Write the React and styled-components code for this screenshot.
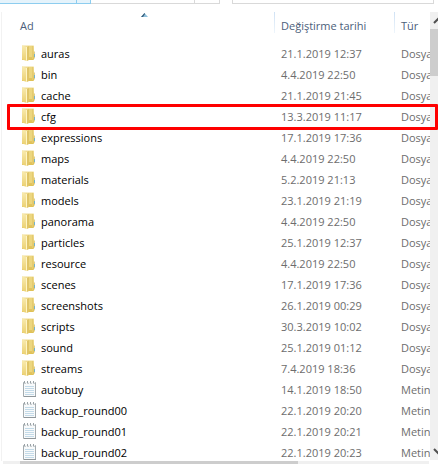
import React from 'react'
import styled, { createGlobalStyle, css } from 'styled-components';

const files = [
    { name: 'auras', date: '21.1.2019 12:37', folder: true },
    { name: 'bin', date: '4.4.2019 22:50', folder: true },
    { name: 'cache', date: '21.1.2019 21:45', folder: true },
    { name: 'cfg', date: '13.3.2019 11:17', folder: true, marked: true },
    { name: 'expressions', date: '17.1.2019 17:36', folder: true },
    { name: 'maps', date: '4.4.2019 22:50', folder: true },
    { name: 'materials', date: '5.2.2019 21:13', folder: true },
    { name: 'models', date: '23.1.2019 21:19', folder: true },
    { name: 'panorama', date: '4.4.2019 22:50', folder: true },
    { name: 'particles', date: '25.1.2019 12:37', folder: true },
    { name: 'resource', date: '4.4.2019 22:50', folder: true },
    { name: 'scenes', date: '17.1.2019 17:36', folder: true },
    { name: 'screenshots', date: '26.1.2019 00:29', folder: true },
    { name: 'scripts', date: '30.3.2019 10:02', folder: true },
    { name: 'sound', date: '25.1.2019 01:12', folder: true },
    { name: 'streams', date: '7.4.2019 18:36', folder: true },
    { name: 'autobuy', date: '14.1.2019 18:50' },
    { name: 'backup_round00', date: '22.1.2019 20:20' },
    { name: 'backup_round01', date: '22.1.2019 20:21' },
    { name: 'backup_round02', date: '22.1.2019 20:23' },
];

const FolderIcon = () => (
    <Icon viewBox="0 0 16 17" aria-hidden="true">
        <defs>
            <linearGradient id="folderBack" x1="0" x2="0" y1="0" y2="1">
                <stop offset="0" stopColor="#f0dc92" />
                <stop offset="1" stopColor="#dfc054" />
            </linearGradient>
            <linearGradient id="folderFront" x1="0" x2="0" y1="0" y2="1">
                <stop offset="0" stopColor="#f8eaae" />
                <stop offset="1" stopColor="#ebd070" />
            </linearGradient>
        </defs>
        <path d="M2 .5h11.500l.5.5v13.500l-1 .5H2z" fill="url(#folderBack)" />
        <path d="M9 1h3v11H9z" fill="#ecd67f" />
        <path d="M12 1h1v13h-1z" fill="#e3ca70" />
        <path d="M14 6.500h1v7h-1z" fill="#dfcf8c" />
        <path d="M14 9h1v3h-1z" fill="#74b3cc" />
        <path d="M2 .5l5 1.500v14l-5-1.500z" fill="url(#folderFront)" />
        <path d="M7 2l2-1v14l-2 1z" fill="#dfc467" />
        <path d="M6 2h1v14l-1-.5z" fill="#fff5c6" />
    </Icon>
)

const TextIcon = () => (
    <Icon viewBox="0 0 16 17" aria-hidden="true">
        <path d="M3.500 1.500h12v14h-12z" fill="#f8fafb" stroke="#a3abaf" />
        <path d="M4 15.500h12" stroke="#8f979b" />
        <path d="M4 1.500h11" stroke="#f0f2f3" />
        <path d="M4.500 0v2l1 1M7.500 0v2l1 1M10.500 0v2l1 1M13.500 0v2l1 1" fill="none" stroke="#9aa2a6" />
        <path d="M5 5.500h9M5 7.500h9M5 9.500h9M5 11.500h9M5 13.500h9" stroke="#c3dae8" />
    </Icon>
)

const App = () => {

    return (
        <Window>
            <GlobalStyle />
            <TopBar>
                <PathBox>
                    <PathPart $active $width="77px" />
                    <PathPart $active $width="14px" />
                    <PathPart $width="104px" />
                    <PathPart $width="25px" />
                </PathBox>
                <SearchBox />
            </TopBar>
            <Content>
                <ListPane>
                    <FileTable>
                        <colgroup>
                            <NameCol />
                            <DateCol />
                            <col />
                        </colgroup>
                        <thead>
                            <tr>
                                <HeadCell scope="col" aria-sort="ascending">
                                    Ad
                                    <SortArrow viewBox="0 0 7 4" aria-hidden="true">
                                        <path d="M3.500 0L7 4H0z" fill="#8fc0dc" />
                                        <path d="M3.500 0L0 4h2l2-3z" fill="#365c79" />
                                    </SortArrow>
                                </HeadCell>
                                <HeadCell scope="col" $line>Değiştirme tarihi</HeadCell>
                                <HeadCell scope="col" $line>Tür</HeadCell>
                            </tr>
                        </thead>
                        <tbody>
                            {files.map((file) => (
                                <tr key={file.name}>
                                    <NameCell>
                                        <FileName>
                                            {file.folder ? <FolderIcon /> : <TextIcon />}
                                            {file.name}
                                        </FileName>
                                        {file.marked && <Marker />}
                                    </NameCell>
                                    <InfoCell>{file.date}</InfoCell>
                                    <InfoCell>{file.folder ? 'Dosya' : 'Metin'}</InfoCell>
                                </tr>
                            ))}
                        </tbody>
                    </FileTable>
                </ListPane>
                <ScrollColumn>
                    <ScrollButton type="button" aria-label="Yukarı kaydır">
                        <Arrow viewBox="0 0 17 17"><path d="M4 11l4.500-4.500L13 11" /></Arrow>
                    </ScrollButton>
                    <VerticalThumb />
                    <ScrollButton type="button" aria-label="Aşağı kaydır" $end>
                        <Arrow viewBox="0 0 17 17"><path d="M4 6l4.500 4.500L13 6" /></Arrow>
                    </ScrollButton>
                </ScrollColumn>
            </Content>
            <BottomScroll>
                <HorizontalThumb />
            </BottomScroll>
        </Window>
    )
}

export default App;

const GlobalStyle = createGlobalStyle`
*{
box-sizing: border-box;
}

body{
margin: 0;
background: white;
font-family: "Open Sans", "Noto Sans", sans-serif;
font-size: 11px;
}
`;

const Window = styled.div`
position: relative;
display: flex;
flex-direction: column;
height: 100vh;
overflow: hidden;
`;

const TopBar = styled.div`
display: flex;
flex: none;
gap: 12px;
height: 4px;
padding-right: 4px;
margin-bottom: 8px;
`;

const PathBox = styled.div`
display: flex;
flex: none;
`;

const PathPart = styled.div`
width: ${props => props.$width};
border-right: 1px solid ${props => props.$active ? '#8dcdef' : '#d9d9d9'};
border-bottom: 1px solid ${props => props.$active ? '#8dcdef' : '#d9d9d9'};
background: ${props => props.$active ? '#e5f3fb' : 'white'};
`;

const SearchBox = styled.div`
flex: 1;
border: 1px solid #d9d9d9;
border-top: none;
`;

const Content = styled.div`
display: flex;
flex: 1;
min-height: 0;
`;

const ListPane = styled.div`
flex: 1;
min-width: 0;
overflow: hidden;
margin-left: 1px;
border-left: 1px solid #f2f2f2;
`;

const FileTable = styled.table`
width: 100%;
table-layout: fixed;
border-collapse: collapse;
`;

const NameCol = styled.col`
width: 272px;
`;

const DateCol = styled.col`
width: 120px;
`;

const cell = css`
padding: 0;
text-align: left;
font-weight: normal;
white-space: nowrap;
overflow: hidden;
`;

const HeadCell = styled.th`
${cell}
position: relative;
height: 31px;
padding: 0 0 5px ${props => props.$line ? '7px' : '18px'};
color: #4c607a;
${props => props.$line && css`
background: linear-gradient(#d0e2f5, #eef5fb) no-repeat left top / 1px 21px;
`}
`;

const SortArrow = styled.svg`
position: absolute;
top: 1px;
left: 51%;
width: 7px;
height: 4px;
`;

const NameCell = styled.td`
${cell}
height: 21px;
padding-left: 18px;
color: black;
`;

const FileName = styled.div`
display: flex;
align-items: center;
gap: 5px;
height: 21px;
`;

const InfoCell = styled.td`
${cell}
padding-left: 7px;
color: #6d6d6d;
`;

const Icon = styled.svg`
flex: none;
width: 16px;
height: 17px;
`;

/* red frame drawn over the row and the scrollbar */
const Marker = styled.div`
position: absolute;
left: 7px;
right: 0;
height: 26px;
margin-top: -23px;
border: 3px solid #fe0000;
border-radius: 1px;
z-index: 1;
`;

const ScrollColumn = styled.div`
display: flex;
flex-direction: column;
flex: none;
width: 8px;
margin-bottom: 1px;
overflow: hidden;
background: #f0f0f0;
`;

const ScrollButton = styled.button`
flex: none;
width: 17px;
height: 17px;
padding: 0;
margin-top: ${props => props.$end ? 'auto' : '0'};
border: none;
background: #f0f0f0;
`;

const Arrow = styled.svg`
display: block;
width: 17px;
height: 17px;
fill: none;
stroke: #505050;
stroke-width: 2;
`;

const VerticalThumb = styled.div`
height: 47px;
background: #cdcdcd;
`;

const BottomScroll = styled.div`
flex: none;
height: 3px;
margin: 0 9px 0 3px;
padding-left: 17px;
background: #f0f0f0;
`;

const HorizontalThumb = styled.div`
width: 68%;
height: 3px;
background: #cdcdcd;
`;
